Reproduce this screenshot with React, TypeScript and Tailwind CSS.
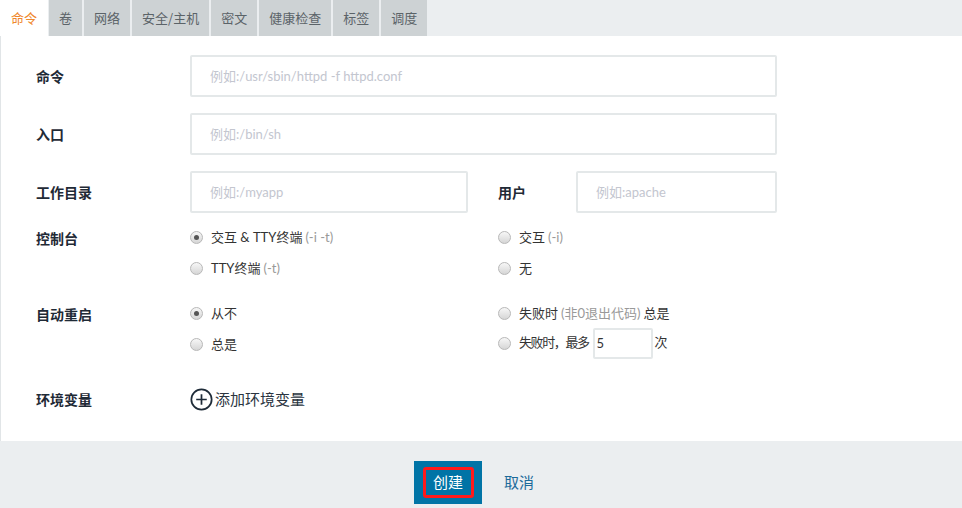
import React from 'react';

const tabs = ['命令', '卷', '网络', '安全/主机', '密文', '健康检查', '标签', '调度'];

const Radio = ({ checked }: { checked?: boolean }) => (
  <span className="w-[13px] h-[13px] rounded-full border border-[#b8b8b8] bg-gradient-to-b from-[#f7f7f7] to-[#d6d6d6] flex items-center justify-center shrink-0">
    {checked && <span className="w-[5px] h-[5px] rounded-full bg-[#555]" />}
  </span>
);

const RadioItem = ({ checked, children }: { checked?: boolean; children: React.ReactNode }) => (
  <label className="flex items-center gap-[8px] text-[13px] text-[#333] font-['Lato','Noto_Sans_CJK_SC',sans-serif]">
    <Radio checked={checked} />
    <span className="flex items-center">{children}</span>
  </label>
);

const TextInput = ({ placeholder, w }: { placeholder: string; w: string }) => (
  <input
    placeholder={placeholder}
    className={`${w} h-[42px] border-2 border-[#e4e8e9] rounded-[2px] px-[18px] text-[13px] outline-none placeholder:text-[#c3c6cf] font-['Lato','Noto_Sans_CJK_SC',sans-serif]`}
  />
);

const Label = ({ children }: { children: React.ReactNode }) => (
  <div className="w-[154px] text-[14px] font-bold text-[#1f2a36]">{children}</div>
);

export default function App() {
  return (
    <div className="w-[962px] h-[508px] bg-[#ebeef0] flex flex-col font-['Noto_Sans_CJK_SC','Noto_Sans',sans-serif] overflow-hidden">
      {/* Tabs */}
      <div className="h-[36px] flex gap-[2px] shrink-0">
        {tabs.map((t, i) => (
          <div
            key={t}
            className={
              i === 0
                ? 'h-full px-[11px] mr-[-1px] flex items-center text-[13px] text-[#f0882c] bg-white'
                : 'h-full px-[10px] flex items-center text-[13px] text-[#5b6368] bg-[#cdd2d4]'
            }
          >
            {t}
          </div>
        ))}
      </div>

      {/* Panel */}
      <div className="h-[405px] bg-white border-l border-[#e1e5e7] pl-[35px] pt-[19px] shrink-0">
        <div className="flex items-center">
          <Label>命令</Label>
          <TextInput w="w-[587px]" placeholder="例如:/usr/sbin/httpd -f httpd.conf" />
        </div>
        <div className="flex items-center mt-[16px]">
          <Label>入口</Label>
          <TextInput w="w-[587px]" placeholder="例如:/bin/sh" />
        </div>
        <div className="flex items-center mt-[16px]">
          <Label>工作目录</Label>
          <TextInput w="w-[278px]" placeholder="例如:/myapp" />
          <div className="w-[108px] pl-[30px] text-[14px] font-bold text-[#1f2a36]">用户</div>
          <TextInput w="w-[201px]" placeholder="例如:apache" />
        </div>

        {/* 控制台 */}
        <div className="flex mt-[15px]">
          <Label>控制台</Label>
          <div className="w-[308px] flex flex-col gap-[11px]">
            <RadioItem checked>
              交互 &amp; TTY终端<span className="text-[#999] ml-[3px]">(-i -t)</span>
            </RadioItem>
            <RadioItem>
              TTY终端<span className="text-[#999] ml-[3px]">(-t)</span>
            </RadioItem>
          </div>
          <div className="flex flex-col gap-[11px]">
            <RadioItem>
              交互<span className="text-[#999] ml-[3px]">(-i)</span>
            </RadioItem>
            <RadioItem>无</RadioItem>
          </div>
        </div>

        {/* 自动重启 */}
        <div className="flex mt-[26px]">
          <Label>自动重启</Label>
          <div className="w-[308px] flex flex-col gap-[11px]">
            <RadioItem checked>从不</RadioItem>
            <RadioItem>总是</RadioItem>
          </div>
          <div className="flex flex-col gap-[4px]">
            <RadioItem>
              失败时<span className="text-[#999] mx-[3px]">(非0退出代码)</span>总是
            </RadioItem>
            <RadioItem>
              <span className="tracking-[-1.4px]">失败时，最多</span>
              <input
                defaultValue="5"
                className="w-[60px] h-[31px] ml-[4px] mr-[2px] border-2 border-[#e4e8e9] rounded-[2px] px-[2px] text-[13px] text-[#333] outline-none"
              />
              次
            </RadioItem>
          </div>
        </div>

        {/* 环境变量 */}
        <div className="flex items-center mt-[29px]">
          <Label>环境变量</Label>
          <div className="flex items-center gap-[2px] text-[15px] text-[#2a3440]">
            <svg width="23" height="23" viewBox="0 0 24 24" fill="none" stroke="#1e2b38" strokeWidth="1.8">
              <circle cx="12" cy="12" r="10.6" />
              <path d="M12 6.5v11M6.5 12h11" />
            </svg>
            添加环境变量
          </div>
        </div>
      </div>

      {/* Footer */}
      <div className="flex items-center pl-[414px] pt-[20px] gap-[22px]">
        <button className="w-[68px] h-[43px] bg-[#0074a6] flex items-center justify-center">
          <span className="w-[51px] h-[31px] border-[3px] border-[#ff1a1a] rounded-[3px] flex items-center justify-center text-[15px] text-white">
            创建
          </span>
        </button>
        <button className="text-[15px] text-[#1c6a9a]">取消</button>
      </div>
    </div>
  );
}
